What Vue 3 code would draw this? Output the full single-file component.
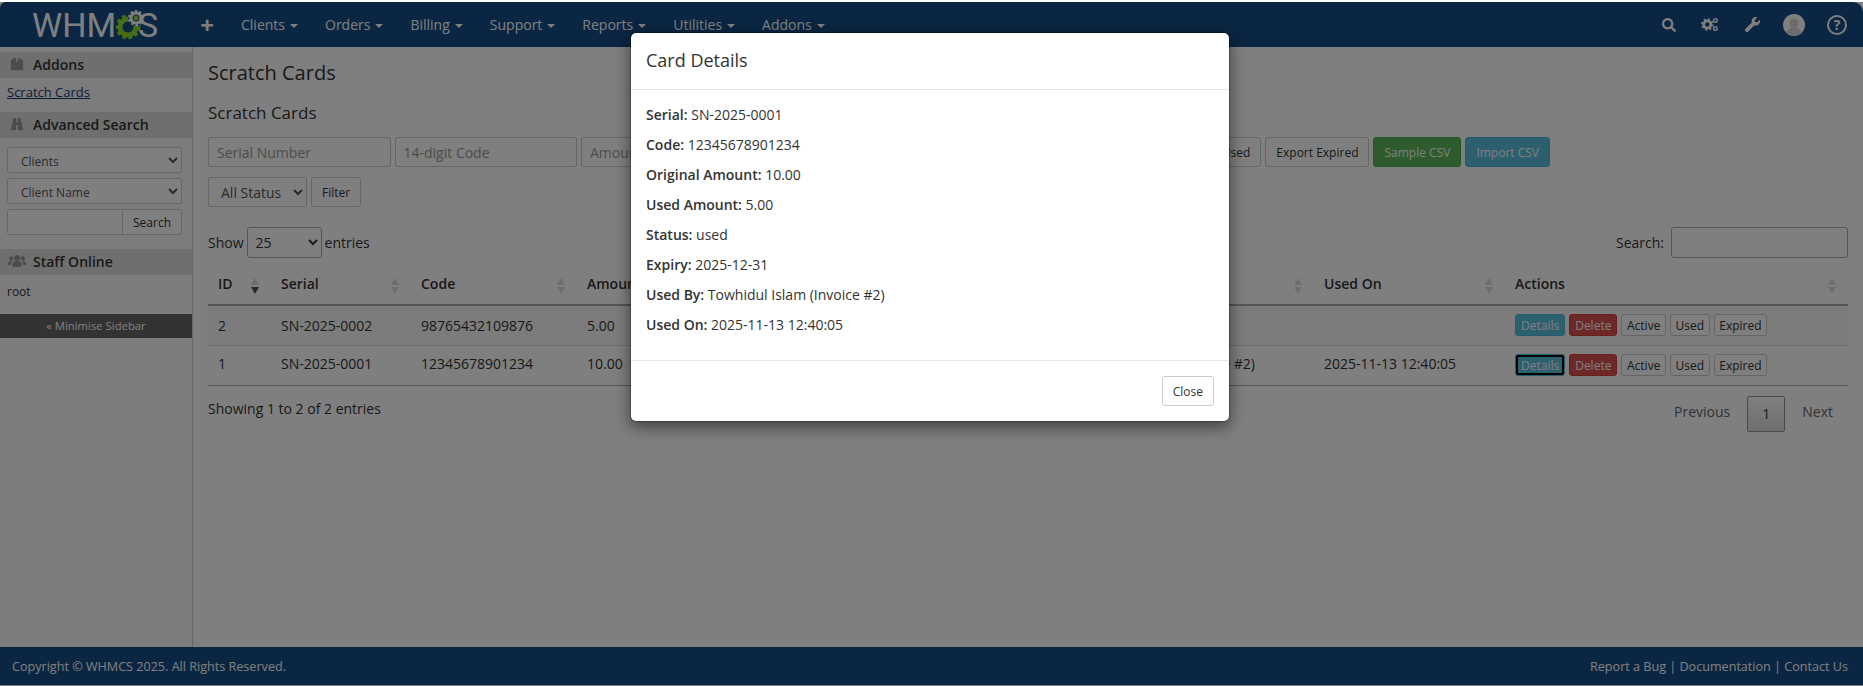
<template>
  <div class="page">
    <div class="top-strip"></div>
    <header class="navbar">
      <div class="logo">
        <span>WHM</span>
        <svg class="logo-gear" viewBox="0 0 27 30" width="27" height="30">
          <circle cx="12" cy="17" r="8" fill="none" stroke="#8fdc2c" stroke-width="5" />
          <circle cx="12" cy="17" r="11" fill="none" stroke="#8fdc2c" stroke-width="3" stroke-dasharray="3.500 3" />
          <circle cx="20" cy="8" r="8" fill="#164c84" />
          <circle cx="20" cy="8" r="5" fill="none" stroke="#fff" stroke-width="3" />
          <circle cx="20" cy="8" r="7" fill="none" stroke="#fff" stroke-width="2" stroke-dasharray="2.500 2" />
          <circle cx="20" cy="8" r="2.500" fill="#8fdc2c" />
        </svg>
        <span>S</span>
      </div>
      <span class="plus">+</span>
      <nav class="nav-items">
        <a v-for="item in navItems" :key="item" class="nav-item">{{ item }}<i class="caret"></i></a>
      </nav>
      <div class="nav-icons">
        <svg class="ico-search" viewBox="0 0 512 512" width="14" height="14"><path fill="currentColor" d="M505 442.7L405.3 343c-4.5-4.5-10.6-7-17-7H372c27.6-35.3 44-79.7 44-128C416 93.1 322.9 0 208 0S0 93.1 0 208s93.1 208 208 208c48.3 0 92.7-16.4 128-44v16.3c0 6.4 2.5 12.5 7 17l99.7 99.7c9.4 9.4 24.6 9.4 33.9 0l28.3-28.3c9.4-9.4 9.4-24.6.1-34zM208 336c-70.7 0-128-57.2-128-128 0-70.7 57.2-128 128-128 70.7 0 128 57.2 128 128 0 70.7-57.2 128-128 128z" /></svg>
        <svg class="ico-gears" viewBox="0 0 20 16" width="18" height="15">
          <circle cx="7" cy="8" r="4" fill="none" stroke="currentColor" stroke-width="3" />
          <circle cx="7" cy="8" r="6" fill="none" stroke="currentColor" stroke-width="2" stroke-dasharray="2.200 2.500" />
          <circle cx="16" cy="3.500" r="2" fill="none" stroke="currentColor" stroke-width="1.600" />
          <circle cx="16" cy="12.500" r="2" fill="none" stroke="currentColor" stroke-width="1.600" />
        </svg>
        <svg class="ico-wrench" viewBox="0 0 512 512" width="15" height="15"><path fill="currentColor" d="M507.73 109.1c-2.24-9.03-13.54-12.09-20.12-5.51l-74.36 74.36-67.88-11.31-11.31-67.88 74.36-74.36c6.62-6.62 3.43-17.9-5.66-20.16-47.38-11.74-99.55.91-136.58 37.93-39.64 39.64-50.55 97.1-34.05 147.2L18.74 402.76c-24.99 24.99-24.99 65.51 0 90.5 24.99 24.99 65.51 24.99 90.5 0l213.21-213.21c50.12 16.71 107.47 5.68 147.37-34.22 37.07-37.07 49.7-89.32 37.91-136.73z" /></svg>
        <svg class="ico-avatar" viewBox="0 0 22 22" width="22" height="22">
          <circle cx="11" cy="11" r="11" fill="#fff" />
          <circle cx="11" cy="9.500" r="4.500" fill="#d8d8d8" />
          <path d="M3.500 19c1-4 4-5.500 7.500-5.500s6.500 1.500 7.500 5.500a11 11 0 0 1-15 0z" fill="#d8d8d8" />
        </svg>
        <span class="ico-help">?</span>
      </div>
    </header>

    <div class="content">
      <aside class="sidebar">
        <div class="side-head">
          <svg viewBox="0 0 16 16" width="14" height="14"><path fill="currentColor" d="M1 4l4-3h2v4h2V1h2l4 3v11H1z" /></svg>
          Addons
        </div>
        <div class="side-body"><a class="side-link">Scratch Cards</a></div>
        <div class="side-head">
          <svg viewBox="0 0 16 16" width="14" height="14"><path fill="currentColor" d="M4 1h3v5h2V1h3l3 14H9V9H7v6H1z" /></svg>
          Advanced Search
        </div>
        <div class="side-search">
          <select class="side-select"><option>Clients</option></select>
          <select class="side-select"><option>Client Name</option></select>
          <div class="side-group">
            <input class="side-input" type="text" />
            <button class="side-btn">Search</button>
          </div>
        </div>
        <div class="side-head">
          <svg class="ico-users" viewBox="0 0 18 14" width="18" height="14">
            <circle cx="9" cy="4" r="3" fill="currentColor" />
            <circle cx="3.200" cy="4.500" r="2.200" fill="currentColor" />
            <circle cx="14.800" cy="4.500" r="2.200" fill="currentColor" />
            <path fill="currentColor" d="M4.500 13V10c0-2 2-3 4.500-3s4.500 1 4.500 3v3zM0 10c0-2 1-3 3-3l1 .5C3.300 8.300 3 9 3 10v1H0zM18 10c0-2-1-3-3-3l-1 .5c.7.800 1 1.500 1 2.500v1h3z" />
          </svg>
          Staff Online
        </div>
        <div class="side-root">root</div>
        <div class="minimise">« Minimise Sidebar</div>
      </aside>

      <main class="main">
        <h1 class="page-title">Scratch Cards</h1>
        <h2 class="sub-title">Scratch Cards</h2>
        <div class="filter-row">
          <input class="field" placeholder="Serial Number" />
          <input class="field" placeholder="14-digit Code" />
          <input class="field" placeholder="Amount" />
          <button class="btn btn-push">Export Used</button>
          <button class="btn">Export Expired</button>
          <button class="btn btn-green">Sample CSV</button>
          <button class="btn btn-blue">Import CSV</button>
        </div>
        <div class="status-row">
          <select class="status-select"><option>All Status</option></select>
          <button class="btn">Filter</button>
        </div>
        <div class="dt-top">
          <label class="dt-length">Show <select class="length-select"><option>25</option></select> entries</label>
          <label class="dt-search">Search: <input class="search-input" type="text" /></label>
        </div>
        <table class="dt">
          <colgroup>
            <col v-for="col in columns" :key="col.key" :style="{ width: col.width + 'px' }" />
          </colgroup>
          <thead>
            <tr>
              <th v-for="col in columns" :key="col.key">
                {{ col.label }}
                <span class="sort">
                  <i class="up"></i>
                  <i class="down" :class="{ on: col.key === 'id' }"></i>
                </span>
              </th>
            </tr>
          </thead>
          <tbody>
            <tr v-for="row in rows" :key="row.id">
              <td>{{ row.id }}</td>
              <td>{{ row.serial }}</td>
              <td>{{ row.code }}</td>
              <td>{{ row.amount }}</td>
              <td></td>
              <td>{{ row.usedBy }}</td>
              <td>{{ row.usedOn }}</td>
              <td class="cell-actions">
                <div class="actions">
                  <button class="xs xs-blue" :class="{ focused: row.id === 1 }">Details</button>
                  <button class="xs xs-red">Delete</button>
                  <button class="xs xs-plain">Active</button>
                  <button class="xs xs-plain">Used</button>
                  <button class="xs xs-plain">Expired</button>
                </div>
              </td>
            </tr>
          </tbody>
        </table>
        <div class="dt-bottom">
          <span class="dt-info">Showing 1 to 2 of 2 entries</span>
          <div class="pager">
            <span class="page-link">Previous</span>
            <span class="page-current">1</span>
            <span class="page-link">Next</span>
          </div>
        </div>
      </main>
    </div>

    <footer class="footer">
      <span>Copyright © WHMCS 2025. All Rights Reserved.</span>
      <span>Report a Bug | Documentation | Contact Us</span>
    </footer>
    <div class="foot-strip"></div>

    <div class="backdrop"></div>
    <div class="modal-wrap">
      <div class="modal">
        <div class="modal-header">Card Details</div>
        <div class="modal-body">
          <p v-for="d in details" :key="d.label"><b>{{ d.label }}:</b> {{ d.value }}</p>
        </div>
        <div class="modal-footer">
          <button class="btn">Close</button>
        </div>
      </div>
    </div>
  </div>
</template>

<script setup>
const navItems = ["Clients", "Orders", "Billing", "Support", "Reports", "Utilities", "Addons"];

const columns = [
  { key: "id", label: "ID", width: 63 },
  { key: "serial", label: "Serial", width: 140 },
  { key: "code", label: "Code", width: 166 },
  { key: "amount", label: "Amount", width: 123 },
  { key: "hidden", label: "", width: 368 },
  { key: "usedBy", label: "Used By", width: 246 },
  { key: "usedOn", label: "Used On", width: 191 },
  { key: "actions", label: "Actions", width: 343 },
];

const rows = [
  { id: 2, serial: "SN-2025-0002", code: "98765432109876", amount: "5.00", usedBy: "", usedOn: "" },
  { id: 1, serial: "SN-2025-0001", code: "12345678901234", amount: "10.00", usedBy: "Towhidul Islam (Invoice #2)", usedOn: "2025-11-13 12:40:05" },
];

const details = [
  { label: "Serial", value: "SN-2025-0001" },
  { label: "Code", value: "12345678901234" },
  { label: "Original Amount", value: "10.00" },
  { label: "Used Amount", value: "5.00" },
  { label: "Status", value: "used" },
  { label: "Expiry", value: "2025-12-31" },
  { label: "Used By", value: "Towhidul Islam (Invoice #2)" },
  { label: "Used On", value: "2025-11-13 12:40:05" },
];
</script>

<style>
html,
body {
  margin: 0;
  background: #fff;
  overflow: hidden;
}
</style>

<style scoped>
* {
  box-sizing: border-box;
}

.page {
  position: relative;
  width: 1863px;
  height: 686px;
  display: flex;
  flex-direction: column;
  overflow: hidden;
  font-family: "Open Sans", sans-serif;
  font-size: 14px;
  color: #333;
}

.top-strip {
  height: 2px;
  background: #fff;
}

.navbar {
  height: 45px;
  flex: none;
  display: flex;
  align-items: center;
  color: #fff;
  background: #164c84;
  border-radius: 6px 10px 0 0;
}

.logo {
  width: 157px;
  padding-left: 32px;
  flex: none;
  display: flex;
  align-items: center;
  font-family: "Roboto", sans-serif;
  font-size: 34px;
  line-height: 34px;
}

.logo-gear {
  margin: 0 -5px 0 0;
  flex: none;
}

.plus {
  width: 22px;
  margin-left: 39px;
  font-size: 24px;
  font-weight: 700;
  line-height: 24px;
  text-align: center;
  margin-right: 23px;
}

.nav-items {
  display: flex;
  gap: 27px;
}

.nav-item {
  display: flex;
  align-items: center;
}

.caret {
  width: 0;
  height: 0;
  margin-left: 5px;
  margin-top: 2px;
  border-top: 4px solid #fff;
  border-left: 4px solid transparent;
  border-right: 4px solid transparent;
}

.nav-icons {
  margin-left: auto;
  margin-right: 16px;
  display: flex;
  align-items: center;
}

.ico-gears {
  margin-left: 25px;
}

.ico-wrench {
  margin-left: 26px;
}

.ico-avatar {
  margin-left: 23px;
}

.ico-help {
  width: 20px;
  height: 20px;
  flex: none;
  margin-left: 22px;
  border: 2px solid #fff;
  border-radius: 50%;
  font-size: 14px;
  font-weight: 700;
  line-height: 16px;
  text-align: center;
}

.content {
  flex: 1;
  min-height: 0;
  display: flex;
  background: #fff;
}

.sidebar {
  width: 193px;
  flex: none;
  padding-top: 5px;
  background: #f8f8f8;
  border-right: 1px solid #ccc;
}

.side-head {
  height: 26px;
  padding: 0 0 2px 10px;
  display: flex;
  align-items: center;
  gap: 9px;
  font-weight: 600;
  background: #dedede;
}

.side-head svg {
  color: #999;
  flex: none;
}

.side-head .ico-users {
  margin: 0 -2px;
}

.side-body {
  height: 34px;
  padding: 4px 7px;
}

.side-link {
  font-size: 13px;
  line-height: 18px;
  color: #1a3a6e;
  text-decoration: underline;
}

.side-search {
  height: 111px;
  padding: 9px 9px 0 7px;
  display: flex;
  flex-direction: column;
  gap: 5px;
}

.side-select {
  height: 26px;
  width: 175px;
  padding: 2px 0 0 9px;
  font-family: inherit;
  font-size: 12px;
  color: #555;
  background: #fff;
  border: 1px solid #ccc;
  border-radius: 3px;
}

.side-group {
  display: flex;
  height: 26px;
  width: 175px;
  border: 1px solid #ccc;
  border-radius: 3px;
  background: #fff;
}

.side-input {
  width: 115px;
  border: 0;
  border-right: 1px solid #ccc;
  background: transparent;
}

.side-btn {
  flex: 1;
  padding: 0;
  border: 0;
  background: transparent;
  font-family: inherit;
  font-size: 12px;
  color: #333;
}

.side-root {
  height: 39px;
  padding: 8px 7px 0;
  font-size: 12px;
  line-height: 17px;
}

.minimise {
  height: 24px;
  font-size: 11.300px;
  line-height: 24px;
  text-align: center;
  color: #fff;
  background: #666;
}

.main {
  flex: 1;
  min-width: 0;
  padding: 0 15px;
}

.page-title {
  margin: 13px 0 0;
  font-size: 20px;
  font-weight: 400;
  line-height: 26px;
}

.sub-title {
  margin: 14px 0 0;
  font-size: 17px;
  font-weight: 400;
  line-height: 26px;
}

.filter-row {
  margin-top: 11px;
  display: flex;
  gap: 4px;
  width: 1342px;
}

.field {
  width: 182.500px;
  height: 30px;
  padding: 0 8px;
  font-family: inherit;
  font-size: 14px;
  color: #555;
  background: #fff;
  border: 1px solid #ccc;
  border-radius: 2px;
}

.field::placeholder {
  color: #999;
}

.btn {
  height: 30px;
  padding: 0 10px;
  font-family: inherit;
  font-size: 12px;
  color: #333;
  background: #fff;
  border: 1px solid #ccc;
  border-radius: 3px;
}

.btn-push {
  margin-left: auto;
}

.btn-green {
  color: #fff;
  background: #5cb85c;
  border-color: #4cae4c;
}

.btn-blue {
  color: #fff;
  background: #5bc0de;
  border-color: #46b8da;
}

.status-row {
  margin-top: 10px;
  display: flex;
  gap: 4px;
}

.status-select {
  width: 99px;
  height: 30px;
  padding-left: 8px;
  font-family: inherit;
  font-size: 14px;
  color: #555;
  background: #fff;
  border: 1px solid #ccc;
  border-radius: 2px;
}

.dt-top {
  margin-top: 20px;
  display: flex;
  justify-content: space-between;
  align-items: center;
}

.dt-length {
  display: flex;
  align-items: center;
  gap: 3px;
}

.length-select {
  width: 75px;
  height: 31px;
  padding-left: 4px;
  font-family: inherit;
  font-size: 14px;
  color: #333;
  background: #fff;
  border: 1px solid #aaa;
  border-radius: 3px;
}

.dt-search {
  display: flex;
  align-items: center;
  gap: 7px;
}

.search-input {
  width: 177px;
  height: 31px;
  background: #fff;
  border: 1px solid #aaa;
  border-radius: 3px;
}

.dt {
  margin-top: 11px;
  width: 1640px;
  table-layout: fixed;
  border-collapse: collapse;
}

.dt th {
  position: relative;
  height: 36px;
  padding: 0 10px 6px;
  font-weight: 600;
  text-align: left;
  border-bottom: 2px solid #aaa;
}

.dt td {
  height: 40px;
  padding: 0 10px;
  border-bottom: 1px solid #ddd;
  white-space: nowrap;
}

.dt tbody tr:first-child {
  background: #f9f9f9;
}

.dt tbody tr:last-child td {
  padding-bottom: 3px;
  border-bottom-color: #aaa;
}

.dt tbody tr:last-child td.cell-actions {
  padding-bottom: 0;
}

.sort {
  position: absolute;
  right: 12px;
  top: 9px;
  display: flex;
  flex-direction: column;
  gap: 2px;
}

.up,
.down {
  display: block;
  width: 0;
  height: 0;
  border-left: 4px solid transparent;
  border-right: 4px solid transparent;
}

.up {
  border-bottom: 7px solid #ddd;
}

.down {
  border-top: 7px solid #ddd;
}

.down.on {
  border-top-color: #555;
}

.actions {
  display: flex;
  gap: 4px;
}

.xs {
  height: 22px;
  padding: 0 5px;
  font-family: inherit;
  font-size: 12px;
  color: #333;
  background: #fff;
  border: 1px solid #ccc;
  border-radius: 3px;
}

.xs-plain {
  padding: 0 4.600px;
}

.xs-blue {
  color: #fff;
  background: #5bc0de;
  border-color: #46b8da;
}

.xs-red {
  color: #fff;
  background: #d9534f;
  border-color: #d43f3a;
}

.focused {
  outline: 2px solid #000;
  outline-offset: -3px;
}

.dt-bottom {
  padding-right: 15px;
  margin-top: 10px;
  display: flex;
  justify-content: space-between;
  align-items: flex-start;
}

.dt-info {
  margin-top: 3px;
}

.pager {
  display: flex;
  align-items: center;
  gap: 17px;
  font-size: 14px;
}

.page-link {
  margin-top: -4px;
  color: #666;
}

.page-current {
  width: 38px;
  height: 36px;
  line-height: 33px;
  text-align: center;
  color: #333;
  background: linear-gradient(#fff, #ddd);
  border: 1px solid #979797;
  border-radius: 2px;
}

.footer {
  height: 38px;
  flex: none;
  padding: 0 15px 0 12px;
  display: flex;
  align-items: center;
  justify-content: space-between;
  font-size: 12.600px;
  color: #fff;
  background: #164c84;
}

.foot-strip {
  height: 1px;
  flex: none;
}

.backdrop {
  position: absolute;
  inset: 2px 0 0;
  background: rgba(0, 0, 0, 0.5);
}

.modal-wrap {
  position: absolute;
  inset: 32px 3px 0 0;
  display: flex;
  justify-content: center;
  align-items: flex-start;
}

.modal {
  width: 600px;
  background: #fff;
  border: 1px solid rgba(0, 0, 0, 0.2);
  background-clip: padding-box;
  border-radius: 6px;
  box-shadow: 0 5px 15px rgba(0, 0, 0, 0.5);
}

.modal-header {
  padding: 15px;
  height: 57px;
  font-size: 18px;
  line-height: 25px;
  border-bottom: 1px solid #e5e5e5;
}

.modal-body {
  padding: 15px;
}

.modal-body p {
  margin: 0 0 10px;
  line-height: 20px;
}

.modal-body b {
  font-weight: 600;
}

.modal-footer {
  padding: 15px;
  display: flex;
  justify-content: flex-end;
  border-top: 1px solid #e5e5e5;
}
</style>
